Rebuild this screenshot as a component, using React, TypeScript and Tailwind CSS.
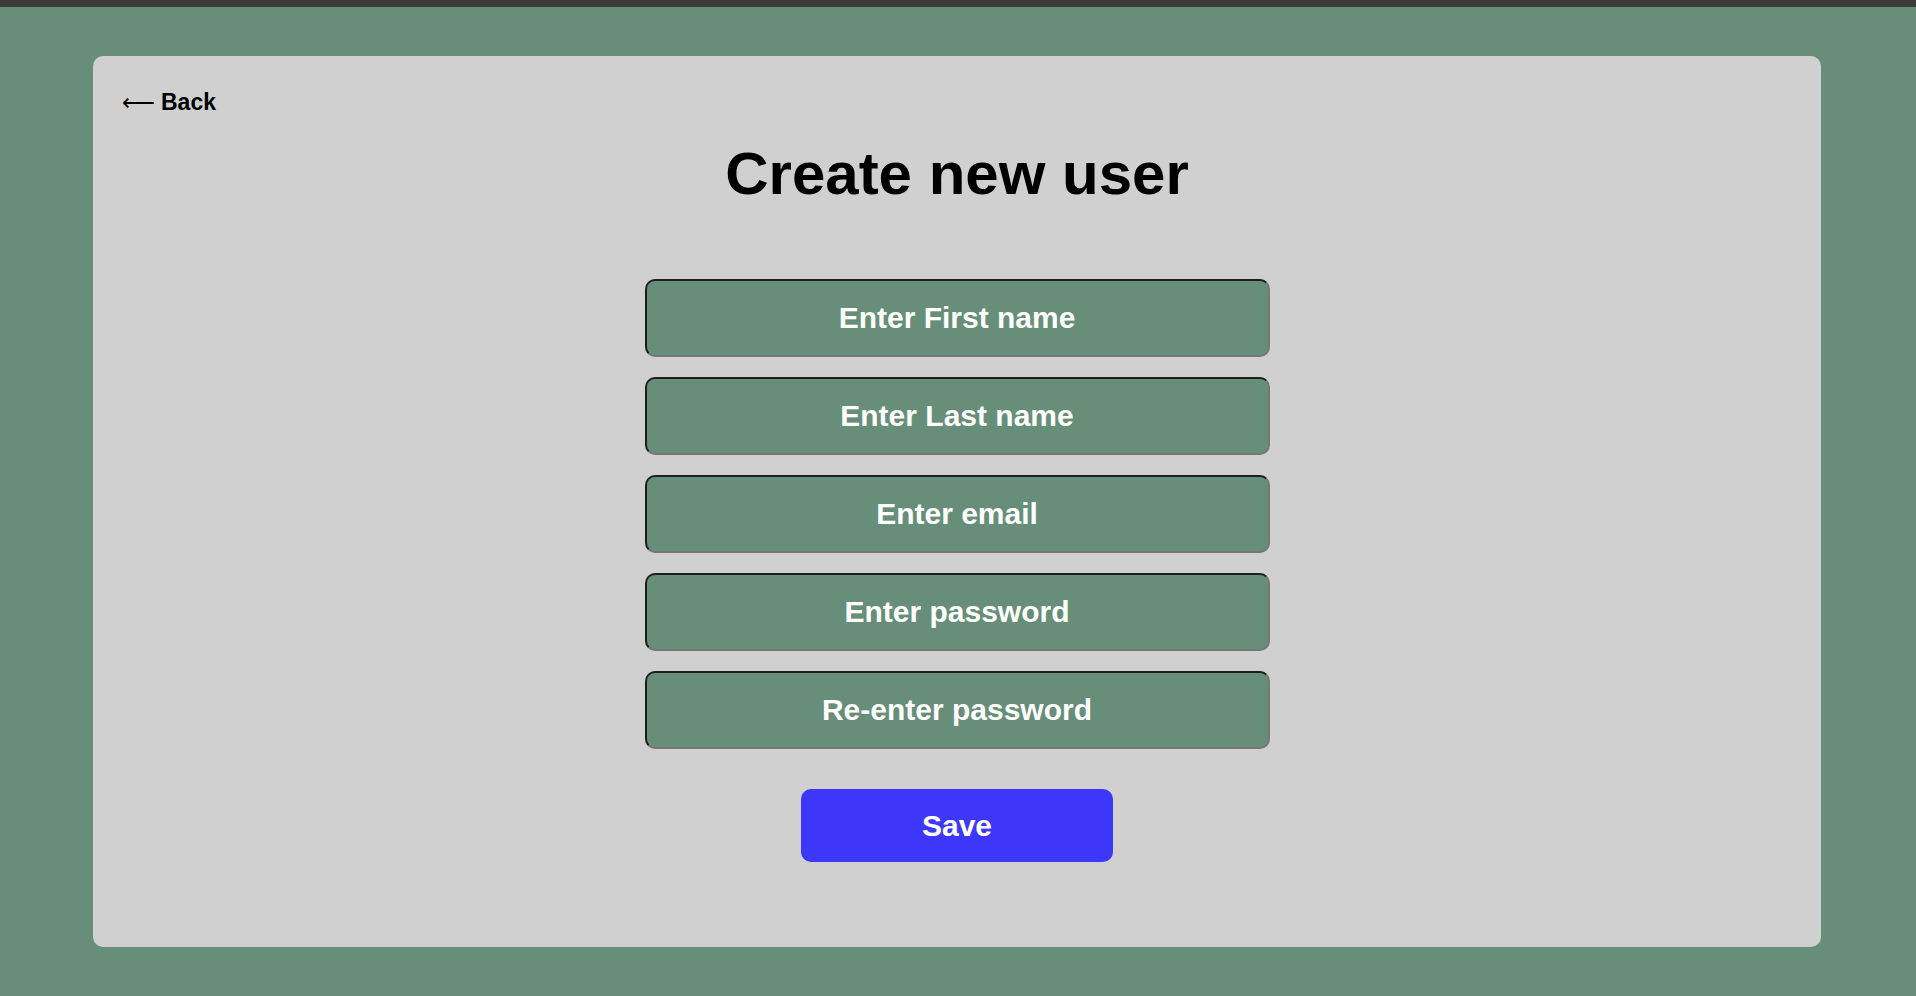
import React from 'react';

const fields = [
  'Enter First name',
  'Enter Last name',
  'Enter email',
  'Enter password',
  'Re-enter password',
];

export default function App() {
  return (
    <div className="min-h-screen bg-[#678e79] font-['Liberation_Sans',Arial,sans-serif]">
      <div className="h-[7px] bg-[#3b3b3b]" />
      <div className="ml-[93px] mt-[49px] flex h-[891px] w-[1728px] flex-col rounded-[10px] bg-[#d0d0d0] px-[29px] pt-[29px]">
        <button className="flex items-center gap-[6px] self-start text-[23px] font-bold text-black">
          <span className="font-normal">⟵</span>
          <span>Back</span>
        </button>

        <h1 className="mt-[19px] text-center text-[60px] font-bold leading-[70px] text-black">Create new user</h1>

        <form className="mt-[70px] flex flex-col items-center gap-[20px]" onSubmit={e => e.preventDefault()}>
          {fields.map(f => (
            <input
              key={f}
              type={f.includes('password') ? 'password' : 'text'}
              placeholder={f}
              className="h-[78px] w-[625px] rounded-[10px] border-2 border-t-[#1e1e1e] border-l-[#1e1e1e] border-r-[#767676] border-b-[#767676] bg-[#678e79] pt-[1px] text-center text-[30px] font-bold text-white outline-none placeholder:text-white"
            />
          ))}
          <button
            type="submit"
            className="mt-[20px] h-[73px] w-[312px] rounded-[10px] bg-[#3d38f9] text-[30px] font-bold text-white"
          >
            Save
          </button>
        </form>
      </div>
    </div>
  );
}
